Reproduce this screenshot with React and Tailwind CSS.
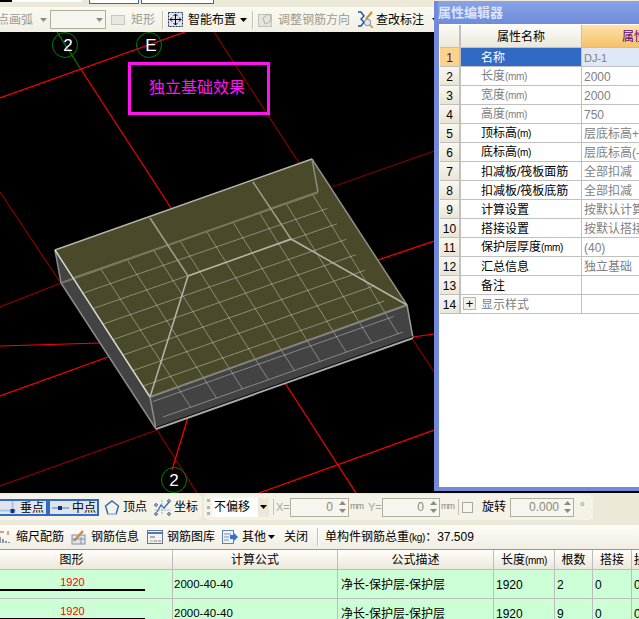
import * as React from 'react';

const FONT = "font-['Liberation_Sans','Noto_Sans_CJK_SC',sans-serif]";

const RED = '#ff0000';
const DARK = '#8c0000';

const redLines = [
  [0, 98, 185, 32, RED],
  [80, 68, 171, 208, RED],
  [214, 32, 299, 163, DARK],
  [332, 187, 434, 151, '#7a0000'],
  [378, 260, 434, 241, RED],
  [413, 337, 434, 334, RED],
  [413, 340, 434, 372, DARK],
  [0, 192, 60, 282, DARK],
  [0, 307, 61, 283, DARK],
  [0, 346, 100, 343, RED],
  [0, 396, 108, 357, RED],
  [0, 486, 157, 430, DARK],
  [157, 430, 197, 493, DARK],
  [188, 417, 172, 470, RED],
  [285, 383, 356, 493, RED],
  [259, 493, 434, 430, RED],
];

const P00 = [72, 278];
const P10 = [318, 193];
const P01 = [163, 417];
const P11 = [403, 332];

const lerp = (a, b, t) => [a[0] + (b[0] - a[0]) * t, a[1] + (b[1] - a[1]) * t];

const gridAcross = Array.from({ length: 10 }, (_, i) => {
  const t = i / 9;
  return [lerp(P00, P01, t), lerp(P10, P11, t)];
});
const gridDown = Array.from({ length: 9 }, (_, i) => {
  const s = 0.115 + 0.108 * i;
  return [lerp(P00, P10, s), lerp(P01, P11, s)];
});

const edges = [
  [61, 283, 318, 192, '#77775a', 2],
  [55, 250, 61, 283, '#8a8a8a', 1.5],
  [61, 283, 156, 429, '#8a8a8a', 1.5],
  [150, 397, 156, 429, '#8a8a8a', 1.5],
  [312, 159, 318, 192, '#8a8a80', 1.5],
  [407, 305, 413, 338, '#9a9a9a', 1.5],
  [312, 159, 407, 305, '#8f8f85', 1.5],
  [150, 397, 407, 305, '#85857d', 2],
  [156, 429, 413, 338, '#a8a8a8', 2],
  [156, 427.5, 413, 336.5, '#000000', 0.8],
  [55, 250, 312, 159, '#b4b4aa', 1.5],
  [55, 250, 150, 397, '#d8d8d0', 1.5],
  [150, 218, 188, 276, '#a0a098', 1.5],
  [253, 182, 291, 239, '#a0a098', 1.5],
  [188, 276, 291, 239, '#b4b4aa', 1.5],
  [188, 276, 150, 397, '#b4b4aa', 1.5],
  [291, 239, 407, 305, '#b4b4aa', 1.5],
];

function Scene() {
  return (
    <svg className="block w-[434px] h-[461px]" viewBox="0 32 434 461">
      {redLines.map((l, i) => (
        <line key={i} x1={l[0]} y1={l[1]} x2={l[2]} y2={l[3]} stroke={l[4]} strokeWidth="1.2" />
      ))}
      <line x1="57" y1="32" x2="80" y2="68" stroke="#008000" strokeWidth="1.2" />
      <circle cx="65" cy="45" r="12.5" fill="none" stroke="#008000" />
      <circle cx="149" cy="45" r="12.5" fill="none" stroke="#008000" />
      <circle cx="174" cy="480" r="12.5" fill="none" stroke="#008000" />
      <text x="68" y="51" textAnchor="middle" fill="#fff" fontSize="17" fontFamily="Liberation Sans">2</text>
      <text x="151" y="51" textAnchor="middle" fill="#fff" fontSize="17" fontFamily="Liberation Sans">E</text>
      <text x="174" y="486" textAnchor="middle" fill="#fff" fontSize="17" fontFamily="Liberation Sans">2</text>

      <polygon points="55,250 61,283 156,429 413,338 407,305 150,397" fill="#434343" />
      <polygon points="55,250 312,159 407,305 150,397" fill="#4a4a2b" />
      {gridAcross.concat(gridDown).map((g, i) => (
        <line
          key={i}
          x1={g[0][0]}
          y1={g[0][1]}
          x2={g[1][0]}
          y2={g[1][1]}
          stroke="#ffffff"
          strokeOpacity="0.36"
        />
      ))}
      {edges.map((e, i) => (
        <line key={i} x1={e[0]} y1={e[1]} x2={e[2]} y2={e[3]} stroke={e[4]} strokeWidth={e[5]} />
      ))}
    </svg>
  );
}

// latin unit in brackets is narrower than the cjk text beside it
function Label({ text }) {
  const at = text.indexOf('(');
  if (at < 1) return text;
  return (
    <>
      {text.slice(0, at)}
      <span className="text-[10px] tracking-[-0.3px]">{text.slice(at)}</span>
    </>
  );
}

const rows = [
  ['名称', 'DJ-1', 'sel'],
  ['长度(mm)', '2000', 'gray'],
  ['宽度(mm)', '2000', 'gray'],
  ['高度(mm)', '750', 'gray'],
  ['顶标高(m)', '层底标高+0.75'],
  ['底标高(m)', '层底标高(-0.05)'],
  ['扣减板/筏板面筋', '全部扣减'],
  ['扣减板/筏板底筋', '全部扣减'],
  ['计算设置', '按默认计算设置'],
  ['搭接设置', '按默认搭接设置'],
  ['保护层厚度(mm)', '(40)'],
  ['汇总信息', '独立基础'],
  ['备注', ''],
  ['显示样式', '', 'plus'],
];

function PropertyPanel() {
  return (
    <div className="absolute left-[434px] top-[1px] w-[205px] h-[490px] flex flex-col bg-[#7288d8] pl-[5px] pb-[4px]">
      <div className="h-[23px] -ml-[1px] flex items-center text-[13px] font-bold text-[#dbe4fa] bg-[linear-gradient(#88a3e6,#6f8bdb)]">
        属性编辑器
      </div>
      <div className="flex-1 bg-white pl-[1px] pt-[1px] overflow-hidden text-[12px] leading-[18px]">
        <div className="flex h-[23px] border-b border-[#c0c0c0]">
          <div className="w-[21px] shrink-0 border-r-2 border-[#c0c0c0] bg-[linear-gradient(#fbfaf5,#ebe8da)]" />
          <div className="w-[121px] shrink-0 border-r border-[#c0c0c0] bg-[linear-gradient(#fdfcf8,#ebe8da)] flex items-center justify-center pt-[1px] text-black">
            属性名称
          </div>
          <div className="flex-1 flex items-center whitespace-nowrap overflow-hidden pl-[40px] pt-[1px] bg-[linear-gradient(#fde3ab,#f4c268)] text-[#5a0080]">
            属性值
          </div>
        </div>
        {rows.map((r, i) => {
          const selected = r[2] === 'sel';
          const gray = r[2] === 'gray' || r[2] === 'plus';
          return (
            <div key={i} className="flex h-[19px] border-b border-[#c0c0c0]">
              <div
                className={
                  selected
                    ? 'w-[21px] shrink-0 border-r-2 border-[#c0c0c0] bg-[#fdd38c] text-[#5a0080] text-center pt-[1px]'
                    : 'w-[21px] shrink-0 border-r-2 border-[#c0c0c0] bg-[linear-gradient(#f9f8f1,#e9e6d7)] text-black text-center pt-[1px]'
                }
              >
                {i + 1}
              </div>
              <div
                className={
                  selected
                    ? 'w-[121px] shrink-0 border-r border-[#c0c0c0] bg-[#316ac5] text-white flex items-center pl-[20px] pt-[1px]'
                    : 'w-[121px] shrink-0 border-r border-[#c0c0c0] flex items-center pl-[20px] pt-[1px] relative'
                }
              >
                {r[2] === 'plus' && (
                  <span className="absolute left-[2px] top-[2px] w-[13px] h-[13px] border border-[#b8b8b0] bg-[#f0f0ea] flex items-center justify-center text-[13px] leading-none text-black">
                    +
                  </span>
                )}
                <span className={gray ? 'text-[#808080]' : selected ? 'text-white' : 'text-black'}>
                  <Label text={r[0]} />
                </span>
              </div>
              <div
                className={
                  selected
                    ? 'flex-1 pl-[2px] pt-[1px] whitespace-nowrap overflow-hidden bg-[#dfe8f6] text-[#808080] text-[11px]'
                    : 'flex-1 pl-[2px] pt-[1px] whitespace-nowrap overflow-hidden text-[#808080]'
                }
              >
                {r[1]}
              </div>
            </div>
          );
        })}
      </div>
    </div>
  );
}

function Arrow({ gray }) {
  return (
    <svg width="7" height="4" viewBox="0 0 7 4" className="shrink-0">
      <path d="M0 0h7L3.5 4z" fill={gray ? '#8a8a8a' : '#000'} />
    </svg>
  );
}

function Sep({ className }) {
  return <div className={'w-[2px] h-[18px] shrink-0 border-l border-[#c5c2b0] bg-white ' + className} />;
}

function TopToolbar() {
  return (
    <div className="h-[25px] flex items-center bg-[linear-gradient(#fbfaf3,#f2f0e3)] text-[12px] whitespace-nowrap overflow-hidden">
      <span className="-ml-[3px] w-[36px] shrink-0 text-right text-[#9a9a90]">点画弧</span>
      <div className="ml-[7px]"><Arrow gray /></div>
      <div className="ml-[3px] w-[56px] h-[19px] border border-[#b0ae9e] bg-[#f6f5ee] flex items-center justify-end pr-[2px] shrink-0">
        <Arrow gray />
      </div>
      <div className="ml-[5px] w-[14px] h-[10px] border border-[#c8c8c0] bg-[#e8e8e0] shrink-0" />
      <span className="ml-[6px] text-[#9a9a90]">矩形</span>
      <Sep className="ml-[7px]" />
      <svg width="15" height="15" viewBox="0 0 15 15" className="ml-[4px] shrink-0">
        <rect x=".5" y=".5" width="14" height="14" fill="#dfe4ef" stroke="#1c2f5c" strokeDasharray="2 1" />
        <path d="M7.5 2v11M2 7.5h11M5.5 4l2-2 2 2M5.5 11l2 2 2-2M4 5.5l-2 2 2 2M11 5.5l2 2-2 2" fill="none" stroke="#000" />
      </svg>
      <span className="ml-[5px] text-black">智能布置</span>
      <div className="ml-[4px]"><Arrow /></div>
      <Sep className="ml-[5px]" />
      <svg width="15" height="15" viewBox="0 0 15 15" className="ml-[4px] shrink-0">
        <rect x=".5" y="2.5" width="13" height="12" fill="#e4e4dc" stroke="#c2c2b8" />
        <path d="M5 6l5-4 3 2-1 6-5 2z" fill="none" stroke="#b0b0a6" />
      </svg>
      <span className="ml-[5px] text-[#9a9a90]">调整钢筋方向</span>
      <svg width="17" height="17" viewBox="0 0 17 17" className="ml-[7px] shrink-0">
        <path d="M1 1h3l3 4-3 3 3 3-3 4H1" fill="none" stroke="#1c4fa8" strokeWidth="1.4" />
        <path d="M15 1l-6 7" stroke="#c98a3a" strokeWidth="2" />
        <circle cx="10.5" cy="11.5" r="3.2" fill="#dfeaf6" stroke="#7a8aa0" />
        <path d="M13 14l3 3" stroke="#d09030" strokeWidth="1.6" />
      </svg>
      <span className="ml-[2px] text-black">查改标注</span>
      <div className="ml-[8px]"><Arrow /></div>
    </div>
  );
}

function Spin({ value, w, right }) {
  return (
    <div className={'h-[19px] border border-[#b0ae9e] flex items-center shrink-0 bg-[#f6f5ee] text-[#8a8a80] ' + w}>
      <span className={'flex-1 text-right ' + right}>{value}</span>
      <div className="w-[11px] h-full flex flex-col items-center justify-center gap-[4px]">
        <svg width="7" height="4" viewBox="0 0 7 4"><path d="M0 4h7L3.5 0z" fill="#8a8a80" /></svg>
        <svg width="7" height="4" viewBox="0 0 7 4"><path d="M0 0h7L3.5 4z" fill="#8a8a80" /></svg>
      </div>
    </div>
  );
}

function SnapToolbar() {
  return (
    <div className="h-[32px] bg-[#ece9d8] flex items-start text-[12px] whitespace-nowrap">
      <div className="w-[202px] h-[26px] rounded-r-[5px] bg-[#f5f3e8] flex items-center shrink-0 mt-[1px]">
        <div className="-ml-[2px] w-[50px] h-[17px] border-2 border-[#316ac5] bg-[#e1e4ea] flex items-center shrink-0 mt-[1px]">
          <svg width="17" height="14" viewBox="0 0 17 14" className="shrink-0">
            <path d="M0 9.5h16" stroke="#a9c4ea" strokeWidth="2" />
            <path d="M12.5 0v13" stroke="#a9c4ea" strokeWidth="2" />
            <rect x="10.500" y="8" width="4" height="4" fill="#12307a" />
          </svg>
          <span className="ml-[3px]">垂点</span>
        </div>
        <div className="w-[51px] h-[17px] border-2 border-[#316ac5] bg-[#e1e4ea] flex items-center shrink-0 mt-[1px] pl-[2px]">
          <svg width="17" height="8" viewBox="0 0 17 8" className="shrink-0">
            <path d="M0 4h17" stroke="#8fb0e0" strokeWidth="2" />
            <rect x="6" y="2" width="4" height="4" fill="#12307a" />
          </svg>
          <span className="ml-[3px]">中点</span>
        </div>
        <svg width="16" height="15" viewBox="0 0 16 15" className="ml-[5px] shrink-0">
          <path d="M8 1l6.500 5-2.500 8H4L1.500 6z" fill="none" stroke="#2c64b4" strokeWidth="1.4" />
          <path d="M4 14h8" stroke="#a9c4ea" strokeWidth="2" />
        </svg>
        <span className="ml-[3px]">顶点</span>
        <svg width="18" height="17" viewBox="0 0 18 17" className="ml-[7px] shrink-0">
          <path d="M3 13l4-7 3 3 5-6" fill="none" stroke="#2c64b4" strokeWidth="1.2" />
          <path d="M8 1v15M1 11h16" stroke="#8fb0e0" strokeDasharray="2 1" />
          <circle cx="2" cy="15" r="1.300" fill="none" stroke="#33568c" />
          <circle cx="2" cy="6" r="1.300" fill="none" stroke="#33568c" />
          <circle cx="15" cy="2" r="1.300" fill="none" stroke="#33568c" />
          <circle cx="15" cy="15" r="1.300" fill="none" stroke="#33568c" />
        </svg>
        <span className="ml-[2px]">坐标</span>
      </div>
      <div className="ml-[2px] w-[389px] h-[26px] rounded-[5px] bg-[#f5f3e8] flex items-center shrink-0 mt-[1px]">
        <div className="ml-[3px] w-[3px] h-[16px] border-l-[3px] border-dotted border-[#b5b3a4] shrink-0" />
        <div className="ml-[2px] w-[57px] h-[19px] bg-white flex items-center justify-between pl-[2px] shrink-0">
          <span>不偏移</span>
          <div className="w-[11px] h-full bg-[#ece9d8] flex items-center justify-center"><Arrow /></div>
        </div>
        <div className="ml-[4px] w-[1px] h-[16px] bg-[#c5c2b0] shrink-0" />
        <span className="ml-[2px] w-[12px] text-[#a8a89c] shrink-0 text-[11px]">X=</span>
        <div className="ml-[2px]"><Spin value="0" w="w-[59px]" right="pr-[4px]" /></div>
        <span className="ml-[1px] w-[13px] text-[9px] tracking-[-1px] text-[#8a8a80] shrink-0">mm</span>
        <span className="ml-[5px] w-[12px] text-[#a8a89c] shrink-0 text-[11px]">Y=</span>
        <div className="ml-[2px]"><Spin value="0" w="w-[58px]" right="pr-[4px]" /></div>
        <span className="ml-[1px] w-[13px] text-[9px] tracking-[-1px] text-[#8a8a80] shrink-0">mm</span>
        <div className="ml-[4px] w-[1px] h-[16px] bg-[#c5c2b0] shrink-0" />
        <div className="ml-[3px] w-[11px] h-[11px] border border-[#a8a89c] bg-[#f6f5ee] shrink-0" />
        <span className="ml-[9px]">旋转</span>
        <div className="ml-[4px]"><Spin value="0.000" w="w-[64px]" right="pr-[3px]" /></div>
        <span className="ml-[6px] text-[#8a8a80]">°</span>
      </div>
    </div>
  );
}

function RebarToolbar() {
  return (
    <div className="h-[25px] flex items-center bg-[linear-gradient(#fdfcf8,#f0eee2)] border-b border-[#7f9db9] text-[12px] whitespace-nowrap overflow-hidden">
      <svg width="12" height="14" viewBox="0 0 12 14" className="-ml-[2px] shrink-0">
        <path d="M2 13V7M5 13V9M8 13v-2M11 13v-1" stroke="#6a7a90" strokeWidth="1.5" />
        <path d="M0 2h6M10 1v4" stroke="#c04020" />
      </svg>
      <span className="ml-[6px]">缩尺配筋</span>
      <svg width="16" height="16" viewBox="0 0 16 16" className="ml-[7px] shrink-0">
        <rect x="1" y="6" width="13" height="9" fill="#dfe6f2" stroke="#8090a8" />
        <path d="M3 12L12 2" stroke="#c8903a" strokeWidth="2.500" />
        <path d="M10 8v7M1 10h13" stroke="#8090a8" />
      </svg>
      <span className="ml-[4px]">钢筋信息</span>
      <svg width="16" height="14" viewBox="0 0 16 14" className="ml-[8px] shrink-0">
        <rect x=".5" y=".5" width="15" height="13" fill="#eef2f8" stroke="#5878a8" />
        <path d="M1 3h14" stroke="#5878a8" strokeWidth="2" />
        <path d="M3 7h5" stroke="#666" />
        <path d="M3 11h3" stroke="#d0a030" /><path d="M7 11h3" stroke="#50a050" /><path d="M11 11h3" stroke="#d06050" />
      </svg>
      <span className="ml-[4px]">钢筋图库</span>
      <svg width="16" height="14" viewBox="0 0 16 14" className="ml-[7px] shrink-0">
        <rect x=".5" y=".5" width="11" height="13" fill="#eef2f8" stroke="#6080b0" />
        <path d="M2 4h7M2 7h5M2 10h5" stroke="#7890b0" />
        <path d="M8 5h4V3l4 4-4 4V9H8z" fill="#3a70c8" />
      </svg>
      <span className="ml-[4px]">其他</span>
      <div className="ml-[2px]"><Arrow /></div>
      <span className="ml-[9px]">关闭</span>
      <Sep className="ml-[9px]" />
      <span className="ml-[6px]">
        单构件钢筋总重<span className="text-[10px] tracking-[-0.3px]">(kg)</span>：37.509
      </span>
    </div>
  );
}

const cols = [
  ['图形', 'w-[173px] pr-[29px] justify-center'],
  ['计算公式', 'w-[165px] justify-center'],
  ['公式描述', 'w-[156px] justify-center'],
  ['长度(mm)', 'w-[61px] justify-center'],
  ['根数', 'w-[38px] justify-center'],
  ['搭接', 'w-[39px] justify-center'],
  ['损耗(%)', 'w-[60px] pl-[2px]'],
];

const data = [
  ['2000-40-40', '净长-保护层-保护层', '1920', '2', '0', '0'],
  ['2000-40-40', '净长-保护层-保护层', '1920', '9', '0', '0'],
];

function RebarTable() {
  return (
    <div className="flex-1 overflow-hidden text-[12px] whitespace-nowrap">
      <div className="flex h-[20px] border-b border-[#bdbdbd]">
        {cols.map((c, i) => (
          <div
            key={i}
            className={'flex items-center shrink-0 overflow-hidden border-r border-[#bdbdbd] bg-[linear-gradient(#fffefb,#ebe8da)] ' + c[1]}
          >
            <span><Label text={c[0]} /></span>
          </div>
        ))}
      </div>
      {data.map((r, i) => (
        <div key={i} className="flex h-[29px] border-b border-[#bdbdbd] bg-[#ccffd5]">
          <div className="w-[173px] shrink-0 border-r border-[#bdbdbd] flex flex-col">
            <div className="w-[145px] h-[19px] flex items-end justify-center text-[#ff0000] text-[11px] leading-[14px]">1920</div>
            <div className="w-[145px] h-[2px] bg-black" />
          </div>
          <div className="w-[165px] shrink-0 border-r border-[#bdbdbd] flex items-center pl-[1px] pt-[2px] text-[11.5px]">{r[0]}</div>
          <div className="w-[156px] shrink-0 border-r border-[#bdbdbd] flex items-center pl-[3px] pt-[2px]">{r[1]}</div>
          <div className="w-[61px] shrink-0 border-r border-[#bdbdbd] flex items-center pl-[2px] pt-[2px]">{r[2]}</div>
          <div className="w-[38px] shrink-0 border-r border-[#bdbdbd] flex items-center pl-[2px] pt-[2px]">{r[3]}</div>
          <div className="w-[39px] shrink-0 border-r border-[#bdbdbd] flex items-center pl-[2px] pt-[2px]">{r[4]}</div>
          <div className="flex-1 flex items-center pl-[2px] pt-[2px]">{r[5]}</div>
        </div>
      ))}
    </div>
  );
}

export default function App() {
  return (
    <div className={'relative w-[639px] h-[619px] overflow-hidden flex flex-col bg-[#ece9d8] text-black ' + FONT}>
      <div className="h-[7px] flex items-start bg-[#ece9d8] shrink-0">
        <div className="w-[12px] h-[2px] bg-black" />
        <div className="w-[70px] h-[2px] bg-white" />
        <div className="ml-[7px] w-[50px] h-[4px] bg-white border-b border-x border-[#316ac5]" />
        <div className="ml-[2px] w-[73px] h-[4px] bg-white border-b border-x border-[#316ac5]" />
      </div>
      <TopToolbar />
      <div className="relative h-[461px] bg-black shrink-0">
        <Scene />
        <div className="absolute left-[128px] top-[30px] w-[142px] h-[53px] border-[3px] border-[#ff14f0] flex items-center justify-center pr-[4px] pb-[2px] text-[16px] text-[#ff14f0]">
          独立基础效果
        </div>
      </div>
      <SnapToolbar />
      <RebarToolbar />
      <RebarTable />
      <PropertyPanel />
    </div>
  );
}
